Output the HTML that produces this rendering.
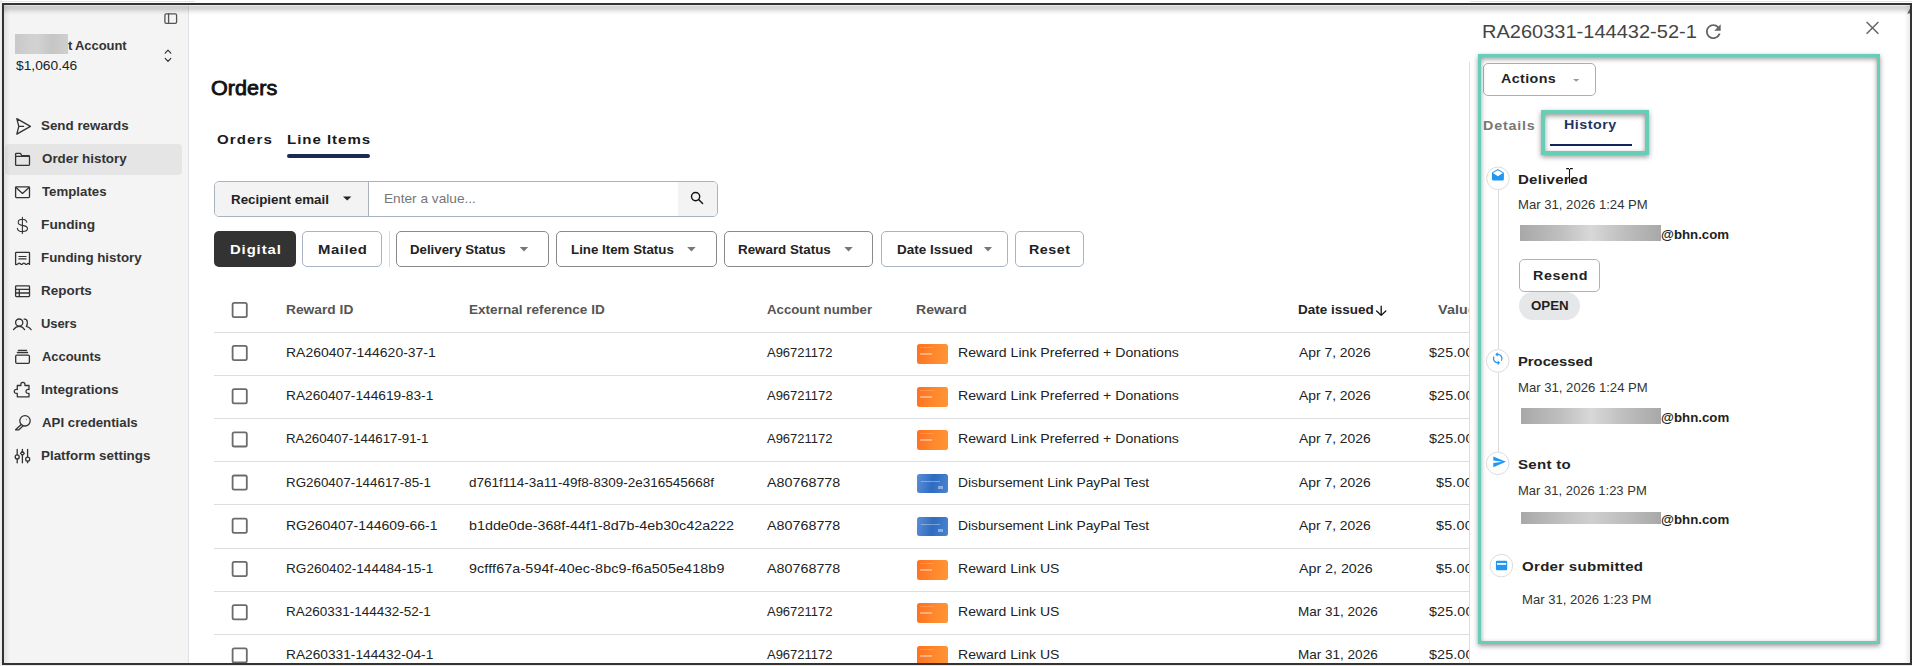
<!DOCTYPE html>
<html><head><meta charset="utf-8">
<style>
html,body{margin:0;padding:0;}
body{width:1912px;height:666px;overflow:hidden;position:relative;background:#fff;font-family:"Liberation Sans",sans-serif;}
.a{position:absolute;box-sizing:border-box;}
.t{position:absolute;white-space:nowrap;font-family:"Liberation Sans",sans-serif;}
svg{position:absolute;left:0;top:0;overflow:visible;}
</style></head><body>
<!-- outer frame backgrounds -->
<div class="a" style="left:0;top:0;width:2px;height:666px;background:linear-gradient(90deg,#f4f4f4,#e4e4e4)"></div>
<div class="a" style="left:0;top:665px;width:1912px;height:1px;background:#e8e8e8"></div>
<div class="a" style="left:4px;top:5px;width:1906px;height:658px;background:#fff"></div>

<!-- MAIN CLIP -->
<div class="a" style="left:4px;top:5px;width:1465px;height:658px;overflow:hidden">
 <div class="a" style="left:-4px;top:-5px;width:1912px;height:666px">
  <!-- sidebar -->
  <div class="a" style="left:4px;top:5px;width:185px;height:658px;background:#f4f4f4;border-right:1px solid #dde1e6"></div>
  <div class="a" style="left:5px;top:144px;width:177px;height:31px;background:#e5e5e5;border-radius:4px"></div>

  <!-- tab underline -->
  <div class="a" style="left:287px;top:154px;width:83px;height:3.6px;background:#1b2b50;border-radius:2px"></div>

  <!-- search group -->
  <div class="a" style="left:214px;top:181px;width:504px;height:36px;border:1px solid #aab2bd;border-radius:5px;overflow:hidden;background:#fff">
    <div class="a" style="left:0;top:0;width:154px;height:34px;background:#f3f3f3;border-right:1px solid #aab2bd"></div>
    <div class="a" style="left:463px;top:0;width:40px;height:34px;background:#f3f3f3"></div>
  </div>

  <!-- filter buttons -->
  <div class="a" style="left:214px;top:231px;width:82px;height:36px;background:#333;border-radius:5px"></div>
  <div class="a" style="left:302px;top:231px;width:80px;height:36px;border:1px solid #aab4c0;border-radius:5px"></div>
  <div class="a" style="left:389px;top:231px;width:1px;height:36px;background:#dcdcdc"></div>
  <div class="a" style="left:396px;top:231px;width:153px;height:36px;border:1px solid #8a8a8a;border-radius:5px"></div>
  <div class="a" style="left:556px;top:231px;width:161px;height:36px;border:1px solid #8a8a8a;border-radius:5px"></div>
  <div class="a" style="left:724px;top:231px;width:149px;height:36px;border:1px solid #8a8a8a;border-radius:5px"></div>
  <div class="a" style="left:881px;top:231px;width:127px;height:36px;border:1px solid #aab4c0;border-radius:5px"></div>
  <div class="a" style="left:1015px;top:231px;width:69px;height:36px;border:1px solid #aab4c0;border-radius:5px"></div>

  <!-- table lines -->
  
  <div class="a" style="left:214px;top:332.0px;width:1260px;height:1px;background:#dedede"></div>
<div class="a" style="left:214px;top:375.0px;width:1260px;height:1px;background:#dedede"></div>
<div class="a" style="left:214px;top:418.0px;width:1260px;height:1px;background:#dedede"></div>
<div class="a" style="left:214px;top:461.0px;width:1260px;height:1px;background:#dedede"></div>
<div class="a" style="left:214px;top:504.0px;width:1260px;height:1px;background:#dedede"></div>
<div class="a" style="left:214px;top:548.0px;width:1260px;height:1px;background:#dedede"></div>
<div class="a" style="left:214px;top:591.0px;width:1260px;height:1px;background:#dedede"></div>
<div class="a" style="left:214px;top:634.0px;width:1260px;height:1px;background:#dedede"></div>

  <span class="t" style="left:68.00px;top:38.85px;font-size:13px;line-height:13px;font-weight:700;color:#333;letter-spacing:0.000px;">t</span>
<span class="t" style="left:75.00px;top:38.85px;font-size:13px;line-height:13px;font-weight:700;color:#333;letter-spacing:-0.067px;">Account</span>
<span class="t" style="left:15.60px;top:58.70px;font-size:13px;line-height:13px;font-weight:400;color:#222;letter-spacing:0.000px;transform:scaleX(1.0596);transform-origin:0 0;">$1,060.46</span>
<span class="t" style="left:40.97px;top:118.80px;font-size:13px;line-height:13px;font-weight:700;color:#333;letter-spacing:0.000px;transform:scaleX(1.0286);transform-origin:0 0;">Send rewards</span>
<span class="t" style="left:42.00px;top:151.80px;font-size:13px;line-height:13px;font-weight:700;color:#333;letter-spacing:0.000px;transform:scaleX(1.0280);transform-origin:0 0;">Order history</span>
<span class="t" style="left:42.00px;top:184.80px;font-size:13px;line-height:13px;font-weight:700;color:#333;letter-spacing:-0.000px;transform:scaleX(1.0190);transform-origin:0 0;">Templates</span>
<span class="t" style="left:40.94px;top:217.80px;font-size:13px;line-height:13px;font-weight:700;color:#333;letter-spacing:0.000px;transform:scaleX(1.0551);transform-origin:0 0;">Funding</span>
<span class="t" style="left:40.98px;top:250.80px;font-size:13px;line-height:13px;font-weight:700;color:#333;letter-spacing:-0.000px;transform:scaleX(1.0247);transform-origin:0 0;">Funding history</span>
<span class="t" style="left:40.96px;top:283.80px;font-size:13px;line-height:13px;font-weight:700;color:#333;letter-spacing:0.000px;transform:scaleX(1.0354);transform-origin:0 0;">Reports</span>
<span class="t" style="left:41.00px;top:316.80px;font-size:13px;line-height:13px;font-weight:700;color:#333;letter-spacing:-0.075px;">Users</span>
<span class="t" style="left:42.00px;top:349.80px;font-size:13px;line-height:13px;font-weight:700;color:#333;letter-spacing:-0.043px;">Accounts</span>
<span class="t" style="left:40.96px;top:382.80px;font-size:13px;line-height:13px;font-weight:700;color:#333;letter-spacing:0.000px;transform:scaleX(1.0438);transform-origin:0 0;">Integrations</span>
<span class="t" style="left:42.00px;top:415.80px;font-size:13px;line-height:13px;font-weight:700;color:#333;letter-spacing:0.000px;transform:scaleX(1.0191);transform-origin:0 0;">API credentials</span>
<span class="t" style="left:40.97px;top:448.80px;font-size:13px;line-height:13px;font-weight:700;color:#333;letter-spacing:0.000px;transform:scaleX(1.0305);transform-origin:0 0;">Platform settings</span>
<span class="t" style="left:210.70px;top:79.20px;font-size:19.6px;line-height:19.6px;font-weight:400;color:#111;letter-spacing:0.055px;transform:scaleX(1.1000);transform-origin:0 0;-webkit-text-stroke:0.8px #111">Orders</span>
<span class="t" style="left:216.70px;top:132.90px;font-size:13.7px;line-height:13.7px;font-weight:700;color:#1a1a1a;letter-spacing:1.000px;transform:scaleX(1.1000);transform-origin:0 0;">Orders</span>
<span class="t" style="left:286.90px;top:132.90px;font-size:13.7px;line-height:13.7px;font-weight:700;color:#1a1a1a;letter-spacing:0.879px;transform:scaleX(1.1000);transform-origin:0 0;">Line Items</span>
<span class="t" style="left:230.77px;top:192.80px;font-size:13px;line-height:13px;font-weight:700;color:#222;letter-spacing:0.000px;transform:scaleX(1.0266);transform-origin:0 0;">Recipient email</span>
<span class="t" style="left:383.75px;top:192.00px;font-size:13px;line-height:13px;font-weight:400;color:#777;letter-spacing:0.000px;transform:scaleX(1.0506);transform-origin:0 0;">Enter a value...</span>
<span class="t" style="left:230.00px;top:243.10px;font-size:13.5px;line-height:13.5px;font-weight:700;color:#fff;letter-spacing:0.818px;transform:scaleX(1.1000);transform-origin:0 0;">Digital</span>
<span class="t" style="left:318.20px;top:243.10px;font-size:13.5px;line-height:13.5px;font-weight:700;color:#222;letter-spacing:0.491px;transform:scaleX(1.1000);transform-origin:0 0;">Mailed</span>
<span class="t" style="left:410.08px;top:243.00px;font-size:13px;line-height:13px;font-weight:700;color:#222;letter-spacing:0.000px;transform:scaleX(1.0183);transform-origin:0 0;">Delivery Status</span>
<span class="t" style="left:570.88px;top:243.00px;font-size:13px;line-height:13px;font-weight:700;color:#222;letter-spacing:0.000px;transform:scaleX(1.0242);transform-origin:0 0;">Line Item Status</span>
<span class="t" style="left:737.87px;top:243.00px;font-size:13px;line-height:13px;font-weight:700;color:#222;letter-spacing:0.000px;transform:scaleX(1.0270);transform-origin:0 0;">Reward Status</span>
<span class="t" style="left:896.86px;top:243.00px;font-size:13px;line-height:13px;font-weight:700;color:#222;letter-spacing:0.000px;transform:scaleX(1.0366);transform-origin:0 0;">Date Issued</span>
<span class="t" style="left:1029.40px;top:243.00px;font-size:13px;line-height:13px;font-weight:700;color:#222;letter-spacing:0.455px;transform:scaleX(1.1000);transform-origin:0 0;">Reset</span>
<span class="t" style="left:286.24px;top:303.10px;font-size:13px;line-height:13px;font-weight:700;color:#555;letter-spacing:-0.000px;transform:scaleX(1.0597);transform-origin:0 0;">Reward ID</span>
<span class="t" style="left:469.36px;top:303.10px;font-size:13px;line-height:13px;font-weight:700;color:#555;letter-spacing:0.000px;transform:scaleX(1.0434);transform-origin:0 0;">External reference ID</span>
<span class="t" style="left:767.00px;top:303.10px;font-size:13px;line-height:13px;font-weight:700;color:#555;letter-spacing:0.000px;transform:scaleX(1.0175);transform-origin:0 0;">Account number</span>
<span class="t" style="left:916.42px;top:303.10px;font-size:13px;line-height:13px;font-weight:700;color:#555;letter-spacing:0.000px;transform:scaleX(1.0800);transform-origin:0 0;">Reward</span>
<span class="t" style="left:1298.16px;top:303.10px;font-size:13px;line-height:13px;font-weight:700;color:#222;letter-spacing:0.000px;transform:scaleX(1.0366);transform-origin:0 0;">Date issued</span>
<span class="t" style="left:1437.50px;top:303.10px;font-size:13px;line-height:13px;font-weight:700;color:#555;letter-spacing:0.136px;transform:scaleX(1.1000);transform-origin:0 0;">Value</span>
<span class="t" style="left:286.23px;top:345.90px;font-size:13px;line-height:13px;font-weight:400;color:#222;letter-spacing:0.000px;transform:scaleX(1.0732);transform-origin:0 0;">RA260407-144620-37-1</span>
<span class="t" style="left:767.00px;top:345.90px;font-size:13px;line-height:13px;font-weight:400;color:#222;letter-spacing:-0.013px;">A96721172</span>
<span class="t" style="left:957.91px;top:345.90px;font-size:13px;line-height:13px;font-weight:400;color:#222;letter-spacing:-0.000px;transform:scaleX(1.0856);transform-origin:0 0;">Reward Link Preferred + Donations</span>
<span class="t" style="left:1299.20px;top:345.90px;font-size:13px;line-height:13px;font-weight:400;color:#222;letter-spacing:0.000px;transform:scaleX(1.0672);transform-origin:0 0;">Apr 7, 2026</span>
<span class="t" style="left:1428.50px;top:345.90px;font-size:13px;line-height:13px;font-weight:400;color:#222;letter-spacing:0.109px;transform:scaleX(1.1000);transform-origin:0 0;">$25.00</span>
<span class="t" style="left:286.24px;top:389.10px;font-size:13px;line-height:13px;font-weight:400;color:#222;letter-spacing:0.000px;transform:scaleX(1.0558);transform-origin:0 0;">RA260407-144619-83-1</span>
<span class="t" style="left:767.00px;top:389.10px;font-size:13px;line-height:13px;font-weight:400;color:#222;letter-spacing:-0.013px;">A96721172</span>
<span class="t" style="left:957.91px;top:389.10px;font-size:13px;line-height:13px;font-weight:400;color:#222;letter-spacing:-0.000px;transform:scaleX(1.0856);transform-origin:0 0;">Reward Link Preferred + Donations</span>
<span class="t" style="left:1299.20px;top:389.10px;font-size:13px;line-height:13px;font-weight:400;color:#222;letter-spacing:0.000px;transform:scaleX(1.0672);transform-origin:0 0;">Apr 7, 2026</span>
<span class="t" style="left:1428.50px;top:389.10px;font-size:13px;line-height:13px;font-weight:400;color:#222;letter-spacing:0.109px;transform:scaleX(1.1000);transform-origin:0 0;">$25.00</span>
<span class="t" style="left:286.28px;top:432.30px;font-size:13px;line-height:13px;font-weight:400;color:#222;letter-spacing:0.000px;transform:scaleX(1.0210);transform-origin:0 0;">RA260407-144617-91-1</span>
<span class="t" style="left:767.00px;top:432.30px;font-size:13px;line-height:13px;font-weight:400;color:#222;letter-spacing:-0.013px;">A96721172</span>
<span class="t" style="left:957.91px;top:432.30px;font-size:13px;line-height:13px;font-weight:400;color:#222;letter-spacing:-0.000px;transform:scaleX(1.0856);transform-origin:0 0;">Reward Link Preferred + Donations</span>
<span class="t" style="left:1299.20px;top:432.30px;font-size:13px;line-height:13px;font-weight:400;color:#222;letter-spacing:0.000px;transform:scaleX(1.0672);transform-origin:0 0;">Apr 7, 2026</span>
<span class="t" style="left:1428.50px;top:432.30px;font-size:13px;line-height:13px;font-weight:400;color:#222;letter-spacing:0.109px;transform:scaleX(1.1000);transform-origin:0 0;">$25.00</span>
<span class="t" style="left:286.27px;top:475.50px;font-size:13px;line-height:13px;font-weight:400;color:#222;letter-spacing:0.000px;transform:scaleX(1.0286);transform-origin:0 0;">RG260407-144617-85-1</span>
<span class="t" style="left:469.06px;top:475.50px;font-size:13px;line-height:13px;font-weight:400;color:#222;letter-spacing:0.000px;transform:scaleX(1.0391);transform-origin:0 0;">d761f114-3a11-49f8-8309-2e316545668f</span>
<span class="t" style="left:767.00px;top:475.50px;font-size:13px;line-height:13px;font-weight:400;color:#222;letter-spacing:0.011px;transform:scaleX(1.1000);transform-origin:0 0;">A80768778</span>
<span class="t" style="left:957.94px;top:475.50px;font-size:13px;line-height:13px;font-weight:400;color:#222;letter-spacing:0.000px;transform:scaleX(1.0642);transform-origin:0 0;">Disbursement Link PayPal Test</span>
<span class="t" style="left:1299.20px;top:475.50px;font-size:13px;line-height:13px;font-weight:400;color:#222;letter-spacing:0.000px;transform:scaleX(1.0672);transform-origin:0 0;">Apr 7, 2026</span>
<span class="t" style="left:1436.00px;top:475.50px;font-size:13px;line-height:13px;font-weight:400;color:#222;letter-spacing:0.182px;transform:scaleX(1.1000);transform-origin:0 0;">$5.00</span>
<span class="t" style="left:286.23px;top:518.70px;font-size:13px;line-height:13px;font-weight:400;color:#222;letter-spacing:0.000px;transform:scaleX(1.0750);transform-origin:0 0;">RG260407-144609-66-1</span>
<span class="t" style="left:469.00px;top:518.70px;font-size:13px;line-height:13px;font-weight:400;color:#222;letter-spacing:0.005px;transform:scaleX(1.1000);transform-origin:0 0;">b1dde0de-368f-44f1-8d7b-4eb30c42a222</span>
<span class="t" style="left:767.00px;top:518.70px;font-size:13px;line-height:13px;font-weight:400;color:#222;letter-spacing:0.011px;transform:scaleX(1.1000);transform-origin:0 0;">A80768778</span>
<span class="t" style="left:957.94px;top:518.70px;font-size:13px;line-height:13px;font-weight:400;color:#222;letter-spacing:0.000px;transform:scaleX(1.0642);transform-origin:0 0;">Disbursement Link PayPal Test</span>
<span class="t" style="left:1299.20px;top:518.70px;font-size:13px;line-height:13px;font-weight:400;color:#222;letter-spacing:0.000px;transform:scaleX(1.0672);transform-origin:0 0;">Apr 7, 2026</span>
<span class="t" style="left:1436.00px;top:518.70px;font-size:13px;line-height:13px;font-weight:400;color:#222;letter-spacing:0.182px;transform:scaleX(1.1000);transform-origin:0 0;">$5.00</span>
<span class="t" style="left:286.25px;top:561.90px;font-size:13px;line-height:13px;font-weight:400;color:#222;letter-spacing:0.000px;transform:scaleX(1.0461);transform-origin:0 0;">RG260402-144484-15-1</span>
<span class="t" style="left:469.00px;top:561.90px;font-size:13px;line-height:13px;font-weight:400;color:#222;letter-spacing:0.122px;transform:scaleX(1.1000);transform-origin:0 0;">9cfff67a-594f-40ec-8bc9-f6a505e418b9</span>
<span class="t" style="left:767.00px;top:561.90px;font-size:13px;line-height:13px;font-weight:400;color:#222;letter-spacing:0.011px;transform:scaleX(1.1000);transform-origin:0 0;">A80768778</span>
<span class="t" style="left:957.92px;top:561.90px;font-size:13px;line-height:13px;font-weight:400;color:#222;letter-spacing:0.000px;transform:scaleX(1.0793);transform-origin:0 0;">Reward Link US</span>
<span class="t" style="left:1299.20px;top:561.90px;font-size:13px;line-height:13px;font-weight:400;color:#222;letter-spacing:0.000px;transform:scaleX(1.0955);transform-origin:0 0;">Apr 2, 2026</span>
<span class="t" style="left:1436.00px;top:561.90px;font-size:13px;line-height:13px;font-weight:400;color:#222;letter-spacing:0.182px;transform:scaleX(1.1000);transform-origin:0 0;">$5.00</span>
<span class="t" style="left:286.26px;top:605.10px;font-size:13px;line-height:13px;font-weight:400;color:#222;letter-spacing:0.000px;transform:scaleX(1.0384);transform-origin:0 0;">RA260331-144432-52-1</span>
<span class="t" style="left:767.00px;top:605.10px;font-size:13px;line-height:13px;font-weight:400;color:#222;letter-spacing:-0.013px;">A96721172</span>
<span class="t" style="left:957.92px;top:605.10px;font-size:13px;line-height:13px;font-weight:400;color:#222;letter-spacing:0.000px;transform:scaleX(1.0793);transform-origin:0 0;">Reward Link US</span>
<span class="t" style="left:1298.16px;top:605.10px;font-size:13px;line-height:13px;font-weight:400;color:#222;letter-spacing:0.000px;transform:scaleX(1.0400);transform-origin:0 0;">Mar 31, 2026</span>
<span class="t" style="left:1428.50px;top:605.10px;font-size:13px;line-height:13px;font-weight:400;color:#222;letter-spacing:0.109px;transform:scaleX(1.1000);transform-origin:0 0;">$25.00</span>
<span class="t" style="left:286.24px;top:648.30px;font-size:13px;line-height:13px;font-weight:400;color:#222;letter-spacing:0.000px;transform:scaleX(1.0558);transform-origin:0 0;">RA260331-144432-04-1</span>
<span class="t" style="left:767.00px;top:648.30px;font-size:13px;line-height:13px;font-weight:400;color:#222;letter-spacing:-0.013px;">A96721172</span>
<span class="t" style="left:957.92px;top:648.30px;font-size:13px;line-height:13px;font-weight:400;color:#222;letter-spacing:0.000px;transform:scaleX(1.0793);transform-origin:0 0;">Reward Link US</span>
<span class="t" style="left:1298.16px;top:648.30px;font-size:13px;line-height:13px;font-weight:400;color:#222;letter-spacing:0.000px;transform:scaleX(1.0400);transform-origin:0 0;">Mar 31, 2026</span>
<span class="t" style="left:1428.50px;top:648.30px;font-size:13px;line-height:13px;font-weight:400;color:#222;letter-spacing:0.109px;transform:scaleX(1.1000);transform-origin:0 0;">$25.00</span>
  <div class="a" style="left:15px;top:34px;width:53px;height:20px;background:linear-gradient(90deg,#c9c9c9,#d3d3d3 40%,#c6c6c6 70%,#cfcfcf)"></div>

  <svg width="1912" height="666" viewBox="0 0 1912 666">
   <g fill="none" stroke="#444" stroke-width="1.3" stroke-linejoin="round" stroke-linecap="round">
    <!-- collapse icon -->
    <rect x="164.9" y="13.9" width="11.7" height="9.4" rx="1.3" stroke="#555"/>
    <line x1="168.6" y1="13.9" x2="168.6" y2="23.3" stroke="#555"/>
    <!-- chevrons -->
    <path d="M165.2 53.2 L168 50.2 L170.8 53.2 M165.2 58.4 L168 61.4 L170.8 58.4" stroke="#333" stroke-width="1.2"/>
    <!-- send -->
    <path d="M16.8 118.6 L30.4 126.4 L16.8 134.1 L18.8 126.4 Z M18.8 126.4 H23.6" stroke="#333"/>
    <!-- folder -->
    <path d="M15.6 165 V154 q0 -.7 .7 -.7 H20.4 L21.7 155.6 H28.7 q.8 0 .8 .8 V164.6 q0 .8 -.8 .8 H16.4 q-.8 0 -.8 -.8 Z M15.6 156.3 H29.5" stroke="#333"/>
    <!-- mail -->
    <rect x="15.6" y="186.8" width="13.9" height="10.8" rx=".8" stroke="#333"/>
    <path d="M16 187.4 L22.5 193.4 L29 187.4" stroke="#333"/>
    <!-- dollar -->
    <path d="M26.8 222.3 C26.3 220.3 24.5 219.3 22.4 219.3 C19.8 219.3 18.2 220.6 18.2 222.4 C18.2 224.3 20 225 22.4 225.4 C25 225.8 27.5 226.6 27.5 228.6 C27.5 230.5 25.4 231.6 22.4 231.6 C19.5 231.6 17.8 230.3 17.3 228.3 M22.4 217.3 V233.5" stroke="#333" stroke-width="1.1"/>
    <!-- receipt -->
    <path d="M15.6 264.4 V253 q0 -.7 .7 -.7 H28.8 q.7 0 .7 .7 V264.4 Q28.3 262.6 27.2 264 Q26 265 24.8 263.5 Q23.6 262.6 22.5 264 Q21.3 265 20.1 263.5 Q18.9 262.6 17.8 264 Q16.6 265 15.6 264.4 Z" stroke="#333"/>
    <path d="M18.9 256.5 H26.1 M18.9 258.9 H26.1" stroke="#333" stroke-width="1.1"/>
    <!-- reports -->
    <rect x="15.6" y="285.8" width="13.9" height="10.8" rx=".8" stroke="#333"/>
    <path d="M15.6 289.4 H29.5 M15.6 293 H29.5 M19.3 289.4 V296.6" stroke="#333"/>
    <!-- users -->
    <circle cx="19.2" cy="322.6" r="3.6" stroke="#333"/>
    <path d="M13.5 329.6 Q16 326.4 19.2 326.4 Q22.4 326.4 24.6 329.6" stroke="#333"/>
    <path d="M24.2 319.2 Q26.8 318.9 27.3 321.8 Q27.6 325 26.3 326.3 Q29.4 327 31.1 329.6" stroke="#333"/>
    <!-- accounts -->
    <path d="M18.4 350.3 H26.6 M17.4 352.5 H27.6" stroke="#333"/>
    <rect x="15.7" y="355.1" width="13.7" height="8.2" rx="1.2" stroke="#333"/>
    <!-- puzzle -->
    <path d="M17.3 396.8 H29 V393.3 Q26 393.8 26 391.4 Q26 389 29 389.5 V385.5 H24.9 Q25.4 382.4 22.9 382.4 Q20.4 382.4 20.9 385.5 H17.3 V389.5 Q14.3 389 14.3 391.4 Q14.3 393.8 17.3 393.3 Z" stroke="#333"/>
    <!-- key -->
    <circle cx="25" cy="420.8" r="5.2" stroke="#333"/>
    <circle cx="26.3" cy="419.3" r=".5" fill="#333" stroke="none"/>
    <path d="M21.2 424.6 L15.6 429.8 L18.6 429.9 L23 426" stroke="#333"/>
    <!-- sliders -->
    <path d="M17.2 449.5 V454.8 M17.2 459 V462.8 M22.4 449.5 V451.3 M22.4 455.4 V462.8 M27.6 449.5 V457.1 M27.6 461.3 V462.8" stroke="#333"/>
    <circle cx="17.2" cy="456.9" r="2" stroke="#333"/>
    <path d="M22.4 451.3 L24.3 453.4 L22.4 455.4 L20.5 453.4 Z" stroke="#333"/>
    <circle cx="27.7" cy="459.2" r="2" stroke="#333"/>
   </g>
   <!-- carets -->
   <path d="M343 196.4 H351.4 L347.2 200.6 Z" fill="#222"/>
   <path d="M519.7 247 H528.2 L524 251.4 Z" fill="#777"/>
   <path d="M687.2 247 H695.6 L691.4 251.4 Z" fill="#777"/>
   <path d="M844.3 247 H852.8 L848.5 251.4 Z" fill="#777"/>
   <path d="M984 247 H992 L988 251.4 Z" fill="#777"/>
   <!-- search icon -->
   <g fill="none" stroke="#111" stroke-width="1.4" stroke-linecap="round">
    <circle cx="695.6" cy="196.6" r="4.1"/>
    <path d="M698.6 199.6 L702.6 203.6"/>
   </g>
   <!-- sort arrow -->
   <path d="M1381.2 306.2 V315.2 M1376.6 311 L1381.2 315.4 L1385.8 311" fill="none" stroke="#111" stroke-width="1.3" stroke-linecap="round" stroke-linejoin="round"/>
   <rect x="232.6" y="302.9" width="14.2" height="14.2" rx="1.6" fill="#fff" stroke="#6b6b6b" stroke-width="1.8"/>
<rect x="232.6" y="345.9" width="14.2" height="14.2" rx="1.6" fill="#fff" stroke="#6b6b6b" stroke-width="1.8"/>
<rect x="232.6" y="389.1" width="14.2" height="14.2" rx="1.6" fill="#fff" stroke="#6b6b6b" stroke-width="1.8"/>
<rect x="232.6" y="432.3" width="14.2" height="14.2" rx="1.6" fill="#fff" stroke="#6b6b6b" stroke-width="1.8"/>
<rect x="232.6" y="475.5" width="14.2" height="14.2" rx="1.6" fill="#fff" stroke="#6b6b6b" stroke-width="1.8"/>
<rect x="232.6" y="518.7" width="14.2" height="14.2" rx="1.6" fill="#fff" stroke="#6b6b6b" stroke-width="1.8"/>
<rect x="232.6" y="561.9" width="14.2" height="14.2" rx="1.6" fill="#fff" stroke="#6b6b6b" stroke-width="1.8"/>
<rect x="232.6" y="605.1" width="14.2" height="14.2" rx="1.6" fill="#fff" stroke="#6b6b6b" stroke-width="1.8"/>
<rect x="232.6" y="648.3" width="14.2" height="14.2" rx="1.6" fill="#fff" stroke="#6b6b6b" stroke-width="1.8"/>
  </svg>
  <div class="a" style="left:917px;top:344.0px;width:31px;height:20px;border-radius:2.5px;background:linear-gradient(100deg,#ff6f1f,#ff8a2e 60%,#ff9636)"><div class="a" style="left:3px;top:9px;width:12px;height:1.5px;background:rgba(255,255,255,.4)"></div><div class="a" style="left:3px;top:3px;width:14px;height:1px;background:rgba(255,255,255,.2)"></div></div>
<div class="a" style="left:917px;top:387.2px;width:31px;height:20px;border-radius:2.5px;background:linear-gradient(100deg,#ff6f1f,#ff8a2e 60%,#ff9636)"><div class="a" style="left:3px;top:9px;width:12px;height:1.5px;background:rgba(255,255,255,.4)"></div><div class="a" style="left:3px;top:3px;width:14px;height:1px;background:rgba(255,255,255,.2)"></div></div>
<div class="a" style="left:917px;top:430.4px;width:31px;height:20px;border-radius:2.5px;background:linear-gradient(100deg,#ff6f1f,#ff8a2e 60%,#ff9636)"><div class="a" style="left:3px;top:9px;width:12px;height:1.5px;background:rgba(255,255,255,.4)"></div><div class="a" style="left:3px;top:3px;width:14px;height:1px;background:rgba(255,255,255,.2)"></div></div>
<div class="a" style="left:917px;top:473.6px;width:31px;height:19px;border-radius:2.5px;background:linear-gradient(100deg,#5b8fd6,#2f6cc0 50%,#4a84cf)"><div class="a" style="left:4px;top:7.5px;width:19px;height:1.2px;background:rgba(255,255,255,.35)"></div><div class="a" style="left:21px;top:12.5px;width:5px;height:3px;background:rgba(255,255,255,.4)"></div></div>
<div class="a" style="left:917px;top:516.8px;width:31px;height:19px;border-radius:2.5px;background:linear-gradient(100deg,#5b8fd6,#2f6cc0 50%,#4a84cf)"><div class="a" style="left:4px;top:7.5px;width:19px;height:1.2px;background:rgba(255,255,255,.35)"></div><div class="a" style="left:21px;top:12.5px;width:5px;height:3px;background:rgba(255,255,255,.4)"></div></div>
<div class="a" style="left:917px;top:560.0px;width:31px;height:20px;border-radius:2.5px;background:linear-gradient(100deg,#ff6f1f,#ff8a2e 60%,#ff9636)"><div class="a" style="left:3px;top:9px;width:12px;height:1.5px;background:rgba(255,255,255,.4)"></div><div class="a" style="left:3px;top:3px;width:14px;height:1px;background:rgba(255,255,255,.2)"></div></div>
<div class="a" style="left:917px;top:603.2px;width:31px;height:20px;border-radius:2.5px;background:linear-gradient(100deg,#ff6f1f,#ff8a2e 60%,#ff9636)"><div class="a" style="left:3px;top:9px;width:12px;height:1.5px;background:rgba(255,255,255,.4)"></div><div class="a" style="left:3px;top:3px;width:14px;height:1px;background:rgba(255,255,255,.2)"></div></div>
<div class="a" style="left:917px;top:646.4px;width:31px;height:20px;border-radius:2.5px;background:linear-gradient(100deg,#ff6f1f,#ff8a2e 60%,#ff9636)"><div class="a" style="left:3px;top:9px;width:12px;height:1.5px;background:rgba(255,255,255,.4)"></div><div class="a" style="left:3px;top:3px;width:14px;height:1px;background:rgba(255,255,255,.2)"></div></div>
 </div>
</div>

<!-- PANEL -->
<div class="a" style="left:1469px;top:62px;width:1px;height:601px;background:#dedede"></div>
<!--PANELTEXT-->
<svg width="1912" height="666" viewBox="0 0 1912 666">
  <!-- refresh -->
  <path transform="translate(1702.3 20.6) scale(0.92)" d="M17.65 6.35C16.2 4.9 14.21 4 12 4c-4.42 0-7.99 3.58-7.99 8s3.57 8 7.99 8c3.73 0 6.84-2.55 7.730-6h-2.08c-.82 2.33-3.04 4-5.65 4-3.310 0-6-2.69-6-6s2.69-6 6-6c1.66 0 3.14.69 4.22 1.78L13 11h7V4l-2.35 2.35z" fill="#666"/>
  <!-- close -->
  <path d="M1866.6 22 L1878.4 33.8 M1878.4 22 L1866.6 33.8" stroke="#666" stroke-width="1.5" fill="none"/>
  <!-- actions caret -->
  <path d="M1573 79 H1579.4 L1576.2 81.8 Z" fill="#999"/>
  <!-- timeline -->
  <g fill="#fff" stroke="#dcdce0" stroke-width="1">
   <line x1="1498.5" y1="190" x2="1498.5" y2="349"/>
   <line x1="1498.5" y1="372.6" x2="1498.5" y2="452"/>
   <circle cx="1498" cy="178.3" r="11.3"/>
   <circle cx="1497.7" cy="360.9" r="11.3"/>
   <circle cx="1497.7" cy="463.3" r="11.3"/>
   <circle cx="1501.4" cy="565.6" r="11.3"/>
  </g>
  <g fill="#2196f3">
   <!-- open envelope -->
   <path transform="translate(1490.7 168.4) scale(0.6)" d="M21.99 8c0-.72-.37-1.35-.94-1.7L12 1 2.95 6.3C2.38 6.65 2 7.28 2 8v10c0 1.1.9 2 2 2h16c1.1 0 2-.9 2-2l-.01-10zM12 13L3.74 7.840 12 3l8.26 4.84L12 13z"/>
   <!-- sync -->
   <path transform="translate(1490.5 351.4) scale(0.6)" d="M12 4V1L8 5l4 4V6c3.31 0 6 2.69 6 6 0 1.01-.25 1.97-.7 2.8l1.46 1.46C19.54 15.03 20 13.57 20 12c0-4.42-3.58-8-8-8zm0 14c-3.31 0-6-2.69-6-6 0-1.01.25-1.970.7-2.8L5.24 7.74C4.46 8.97 4 10.43 4 12c0 4.42 3.58 8 8 8v3l4-4-4-4v3z"/>
   <!-- send -->
   <path transform="translate(1492.1 454.6) scale(0.6)" d="M2.01 21L23 12 2.01 3 2 10l15 2-15 2z"/>
   <!-- card -->
   <rect x="1495.9" y="560.8" width="11.3" height="9.4" rx="1.2"/>
   <rect x="1497" y="563" width="9.1" height="1.8" fill="#fff"/>
  </g>
</svg>

<!-- panel buttons/boxes -->
<div class="a" style="left:1483px;top:63px;width:113px;height:33px;border:1px solid #a6b0bd;border-radius:5px"></div>
<div class="a" style="left:1550px;top:144px;width:82px;height:2px;background:#0f2557"></div>
<div class="a" style="left:1520px;top:225px;width:141px;height:16px;background:linear-gradient(90deg,#a8a8a8,#c0c0c0 30%,#d8d8d8 50%,#bdbdbd 75%,#a8a8a8)"></div>
<div class="a" style="left:1521px;top:408px;width:140px;height:16px;background:linear-gradient(90deg,#a8a8a8,#c0c0c0 30%,#d8d8d8 50%,#bdbdbd 75%,#a8a8a8)"></div>
<div class="a" style="left:1521px;top:512px;width:140px;height:12px;background:linear-gradient(90deg,#a8a8a8,#c0c0c0 30%,#cfcfcf 50%,#bdbdbd 75%,#a8a8a8)"></div>
<div class="a" style="left:1519px;top:259px;width:81px;height:33px;border:1px solid #a9b3bf;border-radius:5px"></div>
<div class="a" style="left:1519px;top:292px;width:61px;height:28px;background:#e6e7e9;border-radius:14px"></div>
<span class="t" style="left:1482.39px;top:22.20px;font-size:19px;line-height:19px;font-weight:400;color:#444;letter-spacing:0.000px;transform:scaleX(1.0537);transform-origin:0 0;">RA260331-144432-52-1</span>
<span class="t" style="left:1500.80px;top:72.00px;font-size:13px;line-height:13px;font-weight:700;color:#222;letter-spacing:0.348px;transform:scaleX(1.1000);transform-origin:0 0;">Actions</span>
<span class="t" style="left:1483.40px;top:118.80px;font-size:13px;line-height:13px;font-weight:700;color:#777;letter-spacing:0.742px;transform:scaleX(1.1000);transform-origin:0 0;">Details</span>
<span class="t" style="left:1564.20px;top:118.00px;font-size:13px;line-height:13px;font-weight:700;color:#1d3461;letter-spacing:0.455px;transform:scaleX(1.1000);transform-origin:0 0;">History</span>
<span class="t" style="left:1518.30px;top:173.00px;font-size:13.7px;line-height:13.7px;font-weight:700;color:#222;letter-spacing:0.227px;transform:scaleX(1.1000);transform-origin:0 0;">Delivered</span>
<span class="t" style="left:1518.39px;top:197.90px;font-size:13px;line-height:13px;font-weight:400;color:#333;letter-spacing:0.000px;transform:scaleX(1.0087);transform-origin:0 0;">Mar 31, 2026 1:24 PM</span>
<span class="t" style="left:1660.68px;top:227.60px;font-size:13px;line-height:13px;font-weight:700;color:#222;letter-spacing:0.000px;transform:scaleX(1.0185);transform-origin:0 0;">@bhn.com</span>
<span class="t" style="left:1532.90px;top:269.00px;font-size:13px;line-height:13px;font-weight:700;color:#222;letter-spacing:0.509px;transform:scaleX(1.1000);transform-origin:0 0;">Resend</span>
<span class="t" style="left:1531.00px;top:298.90px;font-size:13px;line-height:13px;font-weight:700;color:#222;letter-spacing:0.000px;transform:scaleX(1.0222);transform-origin:0 0;">OPEN</span>
<span class="t" style="left:1518.32px;top:355.00px;font-size:13.7px;line-height:13.7px;font-weight:700;color:#222;letter-spacing:0.000px;transform:scaleX(1.0794);transform-origin:0 0;">Processed</span>
<span class="t" style="left:1518.39px;top:380.90px;font-size:13px;line-height:13px;font-weight:400;color:#333;letter-spacing:0.000px;transform:scaleX(1.0087);transform-origin:0 0;">Mar 31, 2026 1:24 PM</span>
<span class="t" style="left:1660.68px;top:410.60px;font-size:13px;line-height:13px;font-weight:700;color:#222;letter-spacing:0.000px;transform:scaleX(1.0200);transform-origin:0 0;">@bhn.com</span>
<span class="t" style="left:1518.30px;top:458.00px;font-size:13.7px;line-height:13.7px;font-weight:700;color:#222;letter-spacing:0.242px;transform:scaleX(1.1000);transform-origin:0 0;">Sent to</span>
<span class="t" style="left:1518.40px;top:483.70px;font-size:13px;line-height:13px;font-weight:400;color:#333;letter-spacing:0.000px;transform:scaleX(1.0008);transform-origin:0 0;">Mar 31, 2026 1:23 PM</span>
<span class="t" style="left:1660.68px;top:512.60px;font-size:13px;line-height:13px;font-weight:700;color:#222;letter-spacing:0.000px;transform:scaleX(1.0200);transform-origin:0 0;">@bhn.com</span>
<span class="t" style="left:1521.60px;top:560.00px;font-size:13.7px;line-height:13.7px;font-weight:700;color:#222;letter-spacing:0.253px;transform:scaleX(1.1000);transform-origin:0 0;">Order submitted</span>
<span class="t" style="left:1521.69px;top:592.90px;font-size:13px;line-height:13px;font-weight:400;color:#333;letter-spacing:-0.000px;transform:scaleX(1.0063);transform-origin:0 0;">Mar 31, 2026 1:23 PM</span>
<!-- I-beam cursor -->
<svg width="1912" height="666" viewBox="0 0 1912 666">
  <path d="M1566.2 168.6 H1569 M1570 168.6 H1572.8 M1569.5 169 V183.2" stroke="#111" stroke-width="1.1" fill="none"/>
</svg>

<!-- annotation boxes -->
<div class="a" style="left:1478px;top:54px;width:402px;height:590px;border:3px solid #66ceb6;box-shadow:0 2px 5px rgba(0,0,0,.4), inset 0 2px 5px rgba(0,0,0,.4)"></div>
<div class="a" style="left:1541px;top:110px;width:108px;height:45px;border:4px solid #66ceb6;box-shadow:0 2px 5px rgba(0,0,0,.4), inset 0 2px 5px rgba(0,0,0,.4)"></div>

<!-- frame -->
<div class="a" style="left:0;top:1px;width:195px;height:1px;background:#e3e3e3"></div>
<div class="a" style="left:1470px;top:1px;width:442px;height:1px;background:#e3e3e3"></div>
<div class="a" style="left:4px;top:5px;width:1906px;height:10px;background:linear-gradient(rgba(0,0,0,.04) 0px,rgba(0,0,0,.17) 1.5px,rgba(0,0,0,.15) 4px,rgba(0,0,0,.04) 7.5px,rgba(0,0,0,0) 10px)"></div>
<svg width="1912" height="666" viewBox="0 0 1912 666"><path d="M1910 8.6 L1907.2 13.6 H1910 Z" fill="#666"/></svg>
<div class="a" style="left:4px;top:5px;width:6px;height:658px;background:linear-gradient(90deg,rgba(0,0,0,.08),rgba(0,0,0,0))"></div>
<div class="a" style="left:1904px;top:5px;width:6px;height:658px;background:linear-gradient(270deg,rgba(0,0,0,.08),rgba(0,0,0,0))"></div>
<div class="a" style="left:2px;top:3px;width:1910px;height:662px;border:2px solid #333"></div>
</body></html>
